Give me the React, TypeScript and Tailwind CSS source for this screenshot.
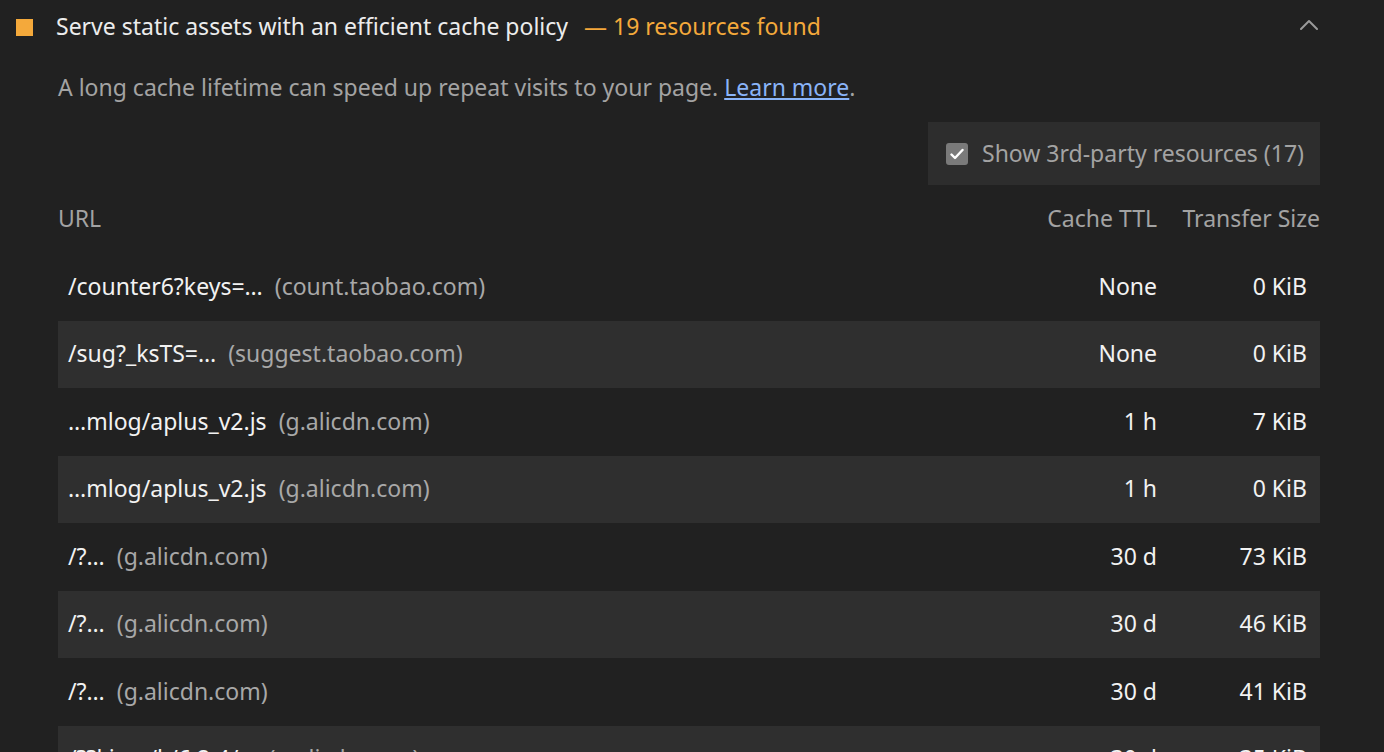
import React from 'react'

type Row = { path: string; host: string; ttl: string; size: string }

const ROWS: Row[] = [
  { path: '/counter6?keys=…', host: '(count.taobao.com)', ttl: 'None', size: '0 KiB' },
  { path: '/sug?_ksTS=…', host: '(suggest.taobao.com)', ttl: 'None', size: '0 KiB' },
  { path: '…mlog/aplus_v2.js', host: '(g.alicdn.com)', ttl: '1 h', size: '7 KiB' },
  { path: '…mlog/aplus_v2.js', host: '(g.alicdn.com)', ttl: '1 h', size: '0 KiB' },
  { path: '/?…', host: '(g.alicdn.com)', ttl: '30 d', size: '73 KiB' },
  { path: '/?…', host: '(g.alicdn.com)', ttl: '30 d', size: '46 KiB' },
  { path: '/?…', host: '(g.alicdn.com)', ttl: '30 d', size: '41 KiB' },
  { path: '/??kissy/k/6.2.4/…', host: '(g.alicdn.com)', ttl: '30 d', size: '35 KiB' },
]

function Chevron() {
  return (
    <svg width="18" height="12" viewBox="0 0 18 12" fill="none">
      <path d="M1 10l8-8 8 8" stroke="#9a9a9a" strokeWidth="2" strokeLinecap="round" strokeLinejoin="round" />
    </svg>
  )
}

function CheckBox() {
  return (
    <span className="flex h-[22px] w-[22px] items-center justify-center rounded-[3px] bg-[#7a7a7a]">
      <svg width="14" height="12" viewBox="0 0 14 12" fill="none">
        <path d="M1.5 6.5l3.5 3.5 7.5-8" stroke="#ffffff" strokeWidth="2.4" strokeLinecap="round" strokeLinejoin="round" />
      </svg>
    </span>
  )
}

export default function App() {
  return (
    <div className="h-[752px] overflow-hidden bg-[#212121] font-['Noto_Sans',sans-serif] text-[23px] leading-[1.3]">
      {/* Audit header */}
      <div className="flex h-[54px] items-center pl-4 pr-[66px]">
        <span className="h-[17px] w-[17px] shrink-0 bg-[#f4a93b] mr-[23px]" />
        <span className="text-[#ececec]">Serve static assets with an efficient cache policy</span>
        <span className="ml-4 text-[#f4a93b]">— 19 resources found</span>
        <span className="ml-auto pb-1">
          <Chevron />
        </span>
      </div>

      <div className="ml-[58px] w-[1262px]">
        {/* Description */}
        <p className="flex h-[68px] items-center text-[#a3a3a3]">
          <span>
            A long cache lifetime can speed up repeat visits to your page.{' '}
            <span className="text-[#8ab4f8] underline underline-offset-2">Learn more</span>.
          </span>
        </p>

        {/* 3rd party toggle */}
        <div className="flex justify-end">
          <div className="flex h-[63px] w-[392px] items-center gap-[14px] bg-[#2d2d2d] pl-[18px]">
            <CheckBox />
            <span className="whitespace-nowrap text-[#a3a3a3]">Show 3rd-party resources (17)</span>
          </div>
        </div>

        {/* Table head */}
        <div className="flex h-[68px] items-center text-[#a3a3a3]">
          <span className="flex-1">URL</span>
          <span className="w-[130px] text-right">Cache TTL</span>
          <span className="w-[163px] text-right">Transfer Size</span>
        </div>

        {/* Table rows */}
        {ROWS.map((r, i) => (
          <div
            key={i}
            className={`flex h-[67.5px] items-center ${i % 2 === 1 ? 'bg-[#2f2f2f]' : ''}`}
          >
            <span className="flex-1 whitespace-nowrap pl-[10px]">
              <span className="text-[#f2f2f2]">{r.path}</span>
              <span className="ml-3 text-[#a8a8a8]">{r.host}</span>
            </span>
            <span className="w-[130px] text-right text-[#f2f2f2]">{r.ttl}</span>
            <span className="w-[163px] pr-[13px] text-right text-[#f2f2f2]">{r.size}</span>
          </div>
        ))}
      </div>
    </div>
  )
}
